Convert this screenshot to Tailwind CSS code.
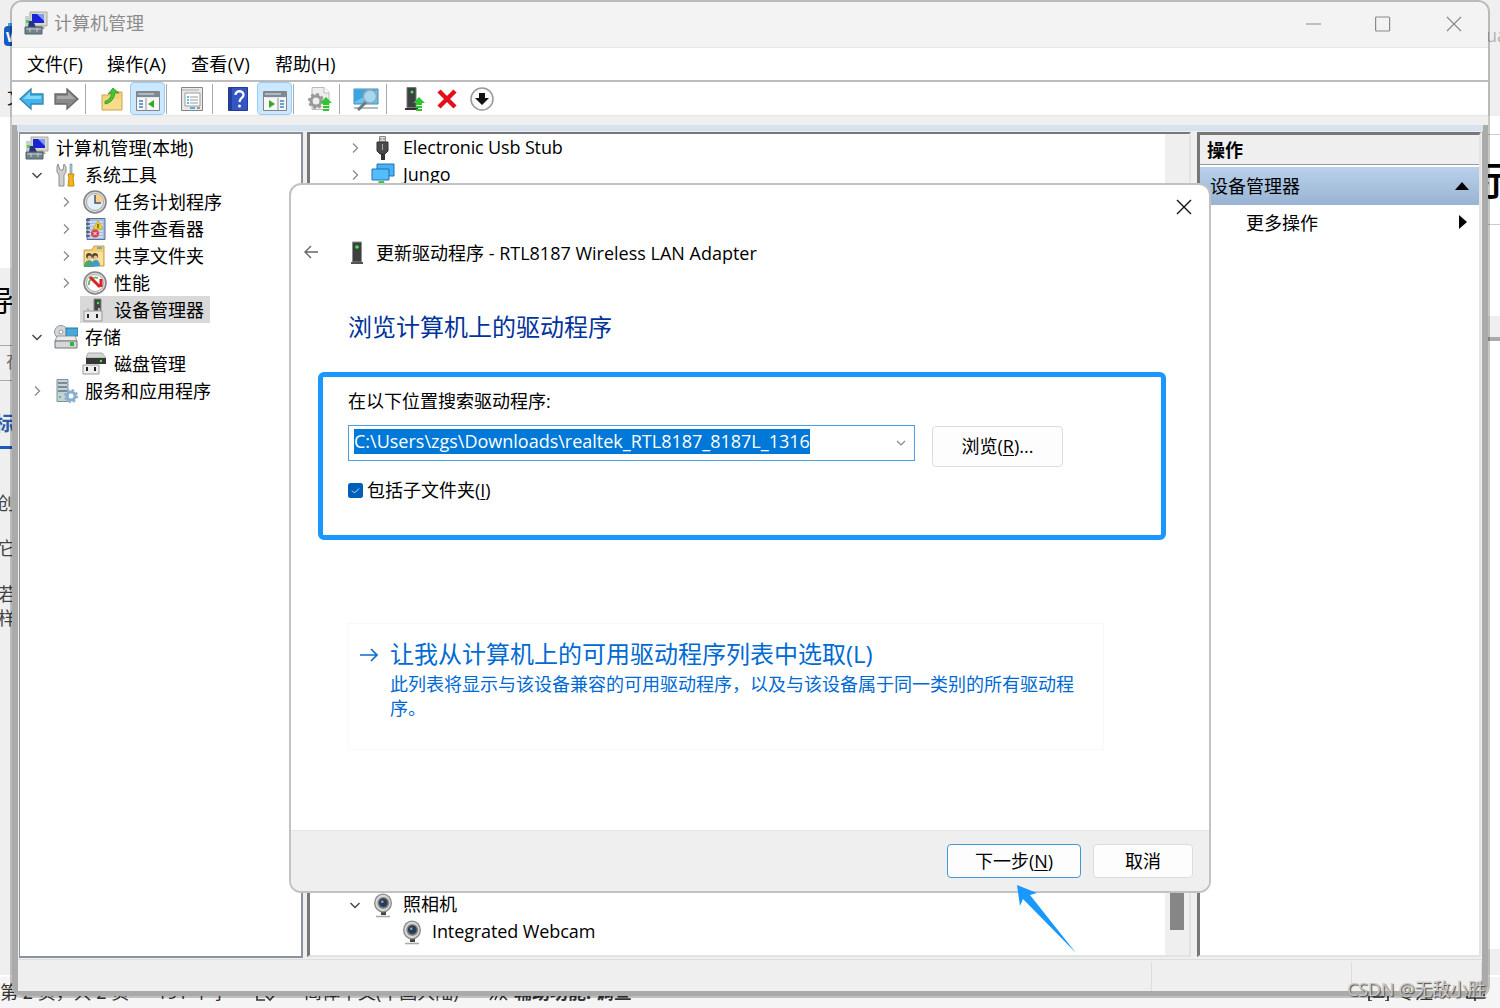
<!DOCTYPE html>
<html lang="zh-CN">
  <head>
    <meta charset="UTF-8" />
    <meta name="viewport" content="width=device-width, initial-scale=1.0" />
    <title>计算机管理</title>
    <script src="https://cdn.jsdelivr.net/npm/@tailwindcss/browser@4"></script>
  </head>
  <body class="relative w-[1500px] h-[1008px] overflow-hidden bg-[#efefef] font-['Open_Sans','Noto_Sans_CJK_SC',sans-serif] text-[18px] leading-[27px] text-black whitespace-nowrap">
    <!-- shared icons -->
    <svg class="hidden">
      <symbol id="chev-r" viewBox="0 0 12 12"><path d="M4 1.500 8.500 6 4 10.500" fill="none" stroke="#8a8a8a" stroke-width="1.300" /></symbol>
      <symbol id="chev-d" viewBox="0 0 12 12"><path d="M1.500 4 6 8.500 10.500 4" fill="none" stroke="#444" stroke-width="1.400" /></symbol>
      <symbol id="computer" viewBox="0 0 24 24">
        <path d="M6 1h17v14H9L6 13z" fill="#d8d8cc" stroke="#aaa99c" />
        <path d="M8 3h12v9H8z" fill="#1c22d8" />
        <path d="M13 3h7v7z" fill="#7d9cf5" />
        <path d="M11 15h8l2 3h-9z" fill="#a8a898" />
        <path d="M1 5h5v12H1z" fill="#c9d0d4" />
        <path d="M2 9h3v3H2z" fill="#53cf44" />
        <path d="M5 10h4l3 6H4z" fill="#27347d" />
        <path d="M1 16h17v7H1z" fill="#71838a" stroke="#526168" />
        <path d="M2 18h15M6 17v4M13 17v4" stroke="#c4d0d3" />
      </symbol>
      <symbol id="device" viewBox="0 0 14 24">
        <path d="M2.500 1h9v20h-9z" fill="#3d3f40" stroke="#8e8e8e" />
        <path d="M1 22h12" stroke="#4f5355" stroke-width="2" />
        <circle cx="7" cy="6" r="1.800" fill="#3df23d" />
      </symbol>
      <symbol id="webcam" viewBox="0 0 24 26">
        <path d="M10 19h5v4h-5z" fill="#444" />
        <path d="M5 24.500h14" stroke="#aaa" stroke-width="1.600" />
        <ellipse cx="12" cy="11" rx="9" ry="9.600" fill="#8b8b8b" />
        <ellipse cx="12" cy="11" rx="7.600" ry="8.200" fill="#d9d9d9" />
        <circle cx="12.300" cy="11" r="6" fill="#85888a" />
        <circle cx="12.300" cy="10.700" r="4.500" fill="#3c4044" />
        <circle cx="12.300" cy="10.700" r="2.800" fill="#1d3b66" />
        <circle cx="11.300" cy="9.700" r="1.200" fill="#86b3df" />
      </symbol>
    </svg>

    <!-- document window in the background -->
    <div class="absolute left-0 top-[117px] w-3 h-[151px] bg-white"></div>
    <div class="absolute left-0 top-[345px] w-3 h-9 border-y border-[#aaa]"></div>
    <div class="absolute left-2 top-[23px] w-4 h-5 bg-[#41a5ee]"></div>
    <div class="absolute left-1 top-[26px] w-4 h-[20px] rounded-sm bg-[#185abd] text-white text-[15px] leading-[20px] font-bold pl-0.5">W</div>
    <div class="absolute left-[7px] top-[84px] text-[#222]">文</div>
    <div class="absolute -left-[15px] top-[283px] text-[29px] leading-[36px]">导</div>
    <div class="absolute left-[6px] top-[348px] text-[#777]">在</div>
    <div class="absolute -left-[6px] top-[410px] text-[20px] font-bold text-[#2b5da8]">标</div>
    <div class="absolute left-0 top-[446px] w-3 h-[3px] bg-[#185abd]"></div>
    <div class="absolute -left-[3px] top-[490px] text-[#444]">创</div>
    <div class="absolute -left-[2px] top-[535px] text-[#444]">它</div>
    <div class="absolute -left-[2px] top-[581px] text-[#444]">若</div>
    <div class="absolute -left-[2px] top-[605px] text-[#444]">样</div>
    <div class="absolute left-[1486px] top-[22px] text-[#b5b5b5]">ua</div>
    <div class="absolute left-[1485px] top-[116px] w-4 h-[200px] bg-white"></div>
    <div class="absolute left-[1485px] top-[134px] w-4 h-[91px] border-y border-[#ccc]"></div>
    <div class="absolute left-[1476px] top-[158px] text-[40px] leading-[44px] font-medium">示</div>
    <div class="absolute left-[1485px] top-[337px] w-4 h-1 bg-[#aaa]"></div>
    <div class="absolute left-[1485px] top-[341px] w-4 h-[608px] bg-white"></div>
    <div class="absolute left-0 top-[975px] w-[1500px] h-[33px] border-t-2 border-white bg-[#f5f5f5] text-[#333]">
      <span class="absolute left-0 top-[2px]">第 2 页，共 2 页</span>
      <span class="absolute left-[157px] top-[2px]">191 个字</span>
      <svg class="absolute left-[255px] top-[5px] w-6 h-5" viewBox="0 0 24 20" fill="none" stroke="#333" stroke-width="1.600"><path d="M2 2v16h8M11 14l4 4 8-9" /></svg>
      <span class="absolute left-[304px] top-[2px]">简体中文(中国大陆)</span>
      <svg class="absolute left-[488px] top-[5px] w-6 h-5" viewBox="0 0 24 20" fill="none" stroke="#333" stroke-width="1.500"><path d="M2 18l5-7v-6M7 18l3-7M12 18l7-11M12 11l7 7" /></svg>
      <span class="absolute left-[514px] top-[2px] font-bold">辅助功能: 调查</span>
      <svg class="absolute left-[1368px] top-[4px] w-6 h-5" viewBox="0 0 24 20" fill="none" stroke="#333" stroke-width="1.700"><path d="M4 20H1v-6M17 20h3v-6M6 5v11h9V5" /></svg>
      <span class="absolute left-[1397px] top-[2px]">专注</span>
      <svg class="absolute left-[1466px] top-[4px] w-5 h-5" viewBox="0 0 20 20" fill="none" stroke="#333" stroke-width="1.700"><path d="M1 3v14h17V3M9 16v4" /></svg>
    </div>

    <!-- computer management window -->
    <div class="absolute left-[10px] top-0 w-[1480px] h-[998px] border-2 border-black/22 rounded-xl overflow-hidden bg-[#efefef] bg-clip-padding flex flex-col">
      <header class="h-[46px] shrink-0 bg-[#f3f3f3] border-b border-[#e6e6e6] flex items-center pl-3 text-[#8c8c8c]">
        <svg class="w-6 h-6 mr-1.5 -mt-1"><use href="#computer" /></svg>
        <span class="-mt-0.5">计算机管理</span>
        <svg class="ml-auto mr-[26px] w-[156px] h-4 -mt-0.5" viewBox="0 0 156 16" fill="none" stroke="#8a8a8a" stroke-width="1.200">
          <path d="M0 8h15M141 1l14 14M155 1 141 15" />
          <rect x="69.600" y="1" width="14" height="14" rx="1" />
        </svg>
      </header>

      <nav class="h-[34px] shrink-0 bg-white border-b-2 border-[#bcbcbc] flex items-center gap-6 pl-[15px]">
        <span>文件(F)</span>
        <span class="w-[60px] tracking-[0.3px]">操作(A)</span>
        <span class="w-[60px] tracking-[0.4px]">查看(V)</span>
        <span class="tracking-[0.2px]">帮助(H)</span>
      </nav>

      <!-- toolbar -->
      <div class="h-[34px] shrink-0 bg-white border-b border-[#e6e6e6] flex items-center pl-[7px] [&>svg]:mt-px">
        <svg class="w-[26px] h-6" viewBox="0 0 26 24"><path d="M1 12 12 2v5h12v10H12v5z" fill="#3db5ef" stroke="#3784ac" stroke-width="1.300" /><path d="M4 12l7-7v4h11v3z" fill="#85d5f8" /></svg>
        <svg class="w-[26px] h-6 ml-2" viewBox="0 0 26 24"><path d="M25 12 14 2v5H2v10h12v5z" fill="#898989" stroke="#676767" stroke-width="1.300" /><path d="M22 12l-7-7v4H4v3z" fill="#a9a9a9" /></svg>
        <div class="w-px h-[30px] bg-[#aaa] ml-[6px]"></div>
        <svg class="w-6 h-6 ml-[14px]" viewBox="0 0 24 24"><path d="M2 8h8l2-3h10v18H2z" fill="#f4d278" stroke="#caa653" /><path d="M3 12h18v10H3z" fill="#f8dc8e" /><path d="M5 14c5-1 6-5 7-8l-4 1 5-6 6 5-4 0c-1 6-4 10-10 11z" fill="#45c531" stroke="#298d1c" stroke-width=".7" /></svg>
        <div class="w-[35px] h-[33px] ml-[6px] rounded-sm border border-[#99ccf5] bg-[#cce8ff] flex items-center justify-center">
          <svg class="w-6 h-6 mt-1" viewBox="0 0 24 24"><path d="M.5 2.500h23v19H.5z" fill="#f7f7f7" stroke="#7d858d" /><path d="M1 3h22v5H1z" fill="#7f8993" /><path d="M2 5h16M2 8.500h20" stroke="#e3e9ed" /><path d="M10 9v12" stroke="#8b9299" /><path d="M3 12h4M3 15h4M3 18h4" stroke="#4680bb" stroke-width="1.600" /><path d="M18 11v8l-6-4z" fill="#35a72d" /></svg>
        </div>
        <div class="w-px h-[30px] bg-[#aaa] ml-px"></div>
        <svg class="w-6 h-6 ml-[13px]" viewBox="0 0 24 24"><path d="M1.500.5h21v23h-21z" fill="#e9e9e9" stroke="#858585" /><path d="M2 3h17" stroke="#aaa" /><path d="M5 6h15v13H5z" fill="#fff" stroke="#9b9b9b" /><path d="M7 10h2M7 13h2M7 16h2" stroke="#37a5e2" stroke-width="1.500" /><path d="M10 10h8M10 13h8M10 16h8" stroke="#999" /><path d="M10 20h5v2h-5z" fill="#4bb6de" /><path d="M17 20h3v2h-3z" fill="#999" /></svg>
        <div class="w-px h-[30px] bg-[#aaa] ml-[8px]"></div>
        <svg class="w-5 h-6 ml-[15px]" viewBox="0 0 20 24"><path d="M.5.5h19v23H.5z" fill="#3456c5" stroke="#263b94" /><path d="M1 1h3v22H1z" fill="#253f99" /><path d="M7.500 8c0-5 8-5 8 0 0 3-4 3-4 7" fill="none" stroke="#fff" stroke-width="2.300" /><circle cx="11.500" cy="19" r="1.500" fill="#fff" /></svg>
        <div class="w-[35px] h-[33px] ml-[9px] rounded-sm border border-[#99ccf5] bg-[#cce8ff] flex items-center justify-center">
          <svg class="w-6 h-6 mt-1" viewBox="0 0 24 24"><path d="M.5 2.500h23v19H.5z" fill="#f7f7f7" stroke="#7d858d" /><path d="M1 3h22v5H1z" fill="#7f8993" /><path d="M2 5h16M2 8.500h20" stroke="#e3e9ed" /><path d="M15 9v12" stroke="#8b9299" /><path d="M17 12h4M17 15h4M17 18h4" stroke="#4680bb" stroke-width="1.600" /><path d="M6 11v8l6-4z" fill="#35a72d" /></svg>
        </div>
        <div class="w-px h-[30px] bg-[#aaa] ml-px"></div>
        <svg class="w-6 h-6 ml-[14px]" viewBox="0 0 24 24"><path d="M4 .5h12l5 5v17H4z" fill="#eee" stroke="#bbb" /><path d="M16 0v6h5" fill="#fff" stroke="#bbb" /><circle cx="8" cy="14" r="5" fill="none" stroke="#999" stroke-width="3" /><circle cx="8" cy="14" r="7" fill="none" stroke="#999" stroke-width="2" stroke-dasharray="3 2.500" /><path d="M18 10l6 6h-3v2h-6v-2h-3zM15 19h6v2h-6zM15 22h6v2h-6z" fill="#2ec52e" /></svg>
        <div class="w-px h-[30px] bg-[#aaa] ml-[7px]"></div>
        <svg class="w-[26px] h-6 ml-[13px]" viewBox="0 0 26 24"><path d="M1 2h24v15H1z" fill="#69c3f2" stroke="#448bb6" /><path d="M1 3h23L1 15z" fill="#3ba4dc" /><path d="M1 21h24" stroke="#96a5af" stroke-width="1.500" /><path d="M5 23l8-8" stroke="#6d7880" stroke-width="3" /><circle cx="17" cy="9.500" r="6.500" fill="#a3d9f5" stroke="#9aa7ae" stroke-width="1.500" /></svg>
        <div class="w-px h-[30px] bg-[#aaa] ml-[7px]"></div>
        <svg class="w-[22px] h-6 ml-[17px]" viewBox="0 0 22 24"><path d="M3 .5h9v20H3z" fill="#3e4143" stroke="#777" /><path d="M1 22h13" stroke="#333" stroke-width="2" /><circle cx="8" cy="5" r="1.500" fill="#3f3" /><path d="M15 10l6 6h-3v2h-6v-2H9zM12 19h6v2h-6zM12 22h6v2h-6z" fill="#2ec52e" /></svg>
        <svg class="w-[22px] h-[22px] ml-[10px]" viewBox="0 0 22 22"><path d="M3 3l16 16M19 3 3 19" stroke="#e3101b" stroke-width="4.500" /></svg>
        <svg class="w-6 h-6 ml-3" viewBox="0 0 24 24"><circle cx="12" cy="12" r="11" fill="#fafafa" stroke="#999" stroke-width="1.500" /><path d="M9 6h6v5h4l-7 7-7-7h4z" fill="#111" /></svg>
      </div>

      <div class="h-[9px] shrink-0"></div>

      <div class="grow border-x-[6px] border-b-[5px] border-[#aaa] bg-[#efefef] flex flex-col">
        <div class="h-[6px] -mx-px bg-[#d6e3ef]"></div>
        <div class="h-[828px] flex pt-px pl-px">
          <!-- console tree -->
          <aside class="w-[284px] h-[826px] bg-white border-2 border-[#8b929b] border-l-[1px] pl-[5px] [&>div]:flex [&>div]:h-[27px] [&>div]:items-center">
            <div><svg class="w-6 h-6 mr-[7px]"><use href="#computer" /></svg><span class="pt-px tracking-[0.1px]">计算机管理(本地)</span></div>
            <div class="pl-[6px]">
              <svg class="w-3 h-3 mr-[11px]"><use href="#chev-d" /></svg>
              <svg class="w-6 h-6 mr-[7px]" viewBox="0 0 24 24"><path d="M4 1l2 6h3l1-6 2 3v5l-2 3v11H5V12L3 9V4z" fill="#d0d0d0" stroke="#8d8d8d" /><path d="M16 1h2v11h-2z" fill="#aac6d8" stroke="#6f8795" stroke-width=".6" /><path d="M14 11h6l-1 4 1 8h-6l1-8z" fill="#f5b51a" stroke="#c18a0b" /></svg>
              <span class="pt-px">系统工具</span>
            </div>
            <div class="pl-[35px]">
              <svg class="w-3 h-3 mr-[11px]"><use href="#chev-r" /></svg>
              <svg class="w-6 h-6 mr-[7px]" viewBox="0 0 24 24"><circle cx="12" cy="12" r="11" fill="#ddd" stroke="#858585" stroke-width="1.600" /><circle cx="12" cy="12" r="8.500" fill="#e5eff8" stroke="#a9a9a9" /><path d="M12 12V4a8 8 0 0 1 8 8z" fill="#f5d08b" /><path d="M12 5v8h6" fill="none" stroke="#456" stroke-width="1.500" /></svg>
              <span class="pt-px">任务计划程序</span>
            </div>
            <div class="pl-[35px]">
              <svg class="w-3 h-3 mr-[11px]"><use href="#chev-r" /></svg>
              <svg class="w-6 h-6 mr-[7px]" viewBox="0 0 24 24"><path d="M4 1.500h18v21H4z" fill="#a5bddd" stroke="#587099" /><path d="M6 5h14M6 8h14M6 11h14M6 14h14M6 17h14M6 20h14" stroke="#eef4fb" /><path d="M3 3h4M3 7h4M3 11h4M3 15h4M3 19h4" stroke="#4a556b" stroke-width="1.500" /><path d="M15 4l5 8H10z" fill="#f9d41c" stroke="#c19900" stroke-width=".6" /><path d="M15 7v4" stroke="#222" /><circle cx="12" cy="16.500" r="4" fill="#dc4450" /><path d="M10.500 15l3 3M13.500 15l-3 3" stroke="#fff" /></svg>
              <span class="pt-px">事件查看器</span>
            </div>
            <div class="pl-[35px]">
              <svg class="w-3 h-3 mr-[11px]"><use href="#chev-r" /></svg>
              <svg class="w-6 h-6 mr-[7px]" viewBox="0 0 24 24"><path d="M1 6h8l2-4h10v20H1z" fill="#f4cf70" stroke="#c79f42" /><path d="M14 4h5" stroke="#4b9be0" stroke-width="1.500" /><path d="M2 8h18v13H2z" fill="#fae19b" /><circle cx="6" cy="12" r="3" fill="#56442f" /><circle cx="12" cy="12" r="3" fill="#56442f" /><path d="M1 23c0-9 10-9 10 0z" fill="#48a779" /><path d="M8 23c0-9 9-9 9-1z" fill="#429cc3" /><circle cx="6.500" cy="13.500" r="2" fill="#e9c09c" /><circle cx="12.500" cy="13.500" r="2" fill="#e9c09c" /></svg>
              <span class="pt-px">共享文件夹</span>
            </div>
            <div class="pl-[35px]">
              <svg class="w-3 h-3 mr-[11px]"><use href="#chev-r" /></svg>
              <svg class="w-6 h-6 mr-[7px]" viewBox="0 0 24 24"><circle cx="12" cy="12" r="11" fill="#ddd" stroke="#858585" stroke-width="1.600" /><circle cx="12" cy="12" r="8.500" fill="#fff" stroke="#aaa" /><path d="M6 14a6.500 6.500 0 0 1 9-7" fill="none" stroke="#6dbb68" stroke-width="2" /><path d="M7 6l10 10M18 8v8" stroke="#dc2225" stroke-width="3" /></svg>
              <span class="pt-px">性能</span>
            </div>
            <div class="ml-[55px] w-[130px] bg-[#d9d9d9] pl-[2px]">
              <svg class="w-6 h-6 mr-[8px]" viewBox="0 0 24 24"><path d="M12 1h7v12h-7z" fill="#414446" stroke="#888" /><circle cx="16" cy="5" r="1.200" fill="#3f3" /><path d="M6 10v3M17 10v3" stroke="#bbb" stroke-width="2" /><path d="M2 13h18v10H2z" fill="#eaeaea" stroke="#999" /><path d="M6 16v4M15 16v4" stroke="#222" stroke-width="2" /></svg>
              <span class="pt-px">设备管理器</span>
            </div>
            <div class="pl-[6px]">
              <svg class="w-3 h-3 mr-[11px]"><use href="#chev-d" /></svg>
              <svg class="w-6 h-6 mr-[7px]" viewBox="0 0 24 24"><circle cx="7" cy="7" r="6.500" fill="#d3d7d9" stroke="#8d989e" /><circle cx="7" cy="7" r="2" fill="#fff" stroke="#999" /><path d="M12 3h12v8H12z" fill="#45a9dc" stroke="#28749e" /><path d="M3 11h18l2 5H1z" fill="#ebebeb" stroke="#999" /><path d="M1 16h22v7H1z" fill="#d4d7d8" stroke="#70777b" /><path d="M18 17v4" stroke="#33b634" stroke-width="4" /></svg>
              <span class="pt-px">存储</span>
            </div>
            <div class="pl-[57px]">
              <svg class="w-6 h-6 mr-[8px]" viewBox="0 0 24 24"><path d="M6 1h14l4 5H4z" fill="#d5d5d5" stroke="#aaa" /><path d="M4 6h20v6H4z" fill="#343637" /><circle cx="19" cy="9" r="1.200" fill="#3f3" /><path d="M1 13h16v9H1z" fill="#eee" stroke="#999" /><path d="M5 15v4M13 15v4" stroke="#222" stroke-width="2" /></svg>
              <span class="pt-px">磁盘管理</span>
            </div>
            <div class="pl-[6px]">
              <svg class="w-3 h-3 mr-[11px]"><use href="#chev-r" /></svg>
              <svg class="w-6 h-6 mr-[7px]" viewBox="0 0 24 24"><path d="M3 .5h11v22H3z" fill="#c4d2d8" stroke="#7d939e" /><path d="M4 4h9M4 8h9M4 12h9" stroke="#61747e" stroke-width="1.500" /><circle cx="6" cy="18" r="1" fill="#3b4" /><circle cx="17" cy="17" r="4" fill="none" stroke="#87aecf" stroke-width="3" /><circle cx="17" cy="17" r="6" fill="none" stroke="#87aecf" stroke-width="2" stroke-dasharray="2.500 2.200" /></svg>
              <span class="pt-px">服务和应用程序</span>
            </div>
          </aside>

          <!-- device list -->
          <main class="w-[884px] h-[825px] ml-1 bg-white border-l-[3px] border-t-2 border-r-2 border-b-2 border-l-[#777] border-t-[#777] border-r-[#e3e3e3] border-b-[#e3e3e3] flex justify-between">
            <div class="pl-[39px] [&>div]:flex [&>div]:h-[27px] [&>div]:items-center">
              <div>
                <svg class="w-3 h-3 mr-[10px]"><use href="#chev-r" /></svg>
                <svg class="w-6 h-6 mr-[8px]" viewBox="0 0 24 24"><path d="M8.500.5h6V6h-6z" fill="#ddd" stroke="#888" /><path d="M10 2v2M13 2v2" stroke="#777" /><path d="M6 6h11v9l-3 3H9l-3-3z" fill="#4a4a4a" stroke="#333" /><path d="M10 18h4v6h-4z" fill="#333" /><path d="M11.500 8v6" stroke="#aaa" /></svg>
                <span class="tracking-[-0.15px]">Electronic Usb Stub</span>
              </div>
              <div>
                <svg class="w-3 h-3 mr-[10px]"><use href="#chev-r" /></svg>
                <svg class="w-6 h-6 mr-[8px]" viewBox="0 0 24 24"><path d="M6 1h17v12H6z" fill="#45b2fa" stroke="#2270a8" /><path d="M1 6h17v11H1z" fill="#54bcff" stroke="#2270a8" /><path d="M8 18h5l1 4H6z" fill="#37ca46" /><path d="M0 21h22" stroke="#aaa" stroke-width="2" /></svg>
                Jungo
              </div>
              <div class="mt-[703px]">
                <svg class="w-3 h-3 mr-[10px]"><use href="#chev-d" /></svg>
                <svg class="w-6 h-[26px] mr-[8px]"><use href="#webcam" /></svg>
                照相机
              </div>
              <div class="pl-[51px]">
                <svg class="w-6 h-[26px] mr-[8px]"><use href="#webcam" /></svg>
                <span class="tracking-[-0.1px]">Integrated Webcam</span>
              </div>
            </div>
            <div class="w-[24px] bg-[#efefef] flex flex-col justify-end pb-[25px] pl-[5px]">
              <div class="w-[14px] h-[90px] bg-[#868686]"></div>
            </div>
          </main>

          <!-- actions -->
          <section class="w-[284px] h-[825px] ml-[6px] bg-white border-l-[3px] border-t-[3px] border-r-2 border-b-2 border-l-[#777] border-t-[#777] border-r-[#e3e3e3] border-b-[#e3e3e3]">
            <div class="h-[30px] bg-[#efefef] border-b border-[#999] pl-[7px] pt-[2px] font-bold">操作</div>
            <div class="h-[38px] mt-[2px] bg-linear-to-b from-[#b9d1ea] to-[#98b3d3] flex items-center justify-between pl-[10px] pr-[10px]">
              <span class="pt-px">设备管理器</span>
              <svg class="w-[14px] h-2" viewBox="0 0 14 8"><path d="M7 0l7 8H0z" /></svg>
            </div>
            <div class="h-9 flex items-center justify-between pl-[46px] pr-3">
              更多操作
              <svg class="w-2 h-[14px] -mt-0.5" viewBox="0 0 8 14"><path d="M0 0l8 7-8 7z" /></svg>
            </div>
          </section>
        </div>

        <!-- status bar -->
        <footer class="grow border-t border-[#ddd] flex justify-end pt-[2px]">
          <div class="w-[200px] border-l border-[#ddd]"></div>
          <div class="w-[131px] border-x border-[#ddd]"></div>
        </footer>
      </div>
    </div>

    <!-- update driver dialog -->
    <div class="absolute left-[289px] top-[183px] w-[922px] h-[710px] border-2 border-[#c2c2c2] rounded-xl overflow-hidden bg-white flex flex-col">
      <div class="h-[42px] shrink-0 flex justify-end pt-[14px] pr-[17px]">
        <svg class="w-4 h-4" viewBox="0 0 16 16"><path d="M1 1l14 14M15 1 1 15" stroke="#111" stroke-width="1.400" /></svg>
      </div>
      <div class="h-[52px] shrink-0 flex items-center pl-[13px]">
        <svg class="w-[14px] h-[14px] -mt-[3px]" viewBox="0 0 14 14" fill="none" stroke="#666" stroke-width="1.400"><path d="M14 7H1M7 1 1 7l6 6" /></svg>
        <svg class="w-[14px] h-6 ml-[32px] mr-3"><use href="#device" /></svg>
        <span>更新驱动程序 - RTL8187 Wireless LAN Adapter</span>
      </div>
      <h1 class="mt-[28px] ml-[57px] text-[24px] leading-[40px] text-[#003399]">浏览计算机上的驱动程序</h1>

      <div class="ml-[27px] mt-[25px] w-[848px] h-[168px] shrink-0 border-[5px] border-[#1a98ff] rounded-md pl-[25px] pt-[11px]">
        <div>在以下位置搜索驱动程序:</div>
        <div class="flex mt-[10px]">
          <div class="w-[567px] h-[36px] border border-[#4ba0e1] flex items-start justify-between pl-[5px] pt-[3px] pr-[7px]">
            <span class="h-[25px] leading-[24px] bg-[#0078d7] text-white">C:\Users\zgs\Downloads\realtek_RTL8187_8187L_1316</span>
            <svg class="w-3 h-3 mt-2" viewBox="0 0 12 12"><path d="M2 4l4 4 4-4" fill="none" stroke="#888" stroke-width="1.200" /></svg>
          </div>
          <button class="w-[131px] h-[41px] ml-[17px] border border-[#ddd] rounded bg-[#fdfdfd] mt-px">浏览(<u class="underline-offset-2">R</u>)...</button>
        </div>
        <div class="flex items-center mt-[10px]">
          <svg class="w-[15px] h-[15px] mr-1" viewBox="0 0 15 15"><rect width="15" height="15" rx="2.500" fill="#005fb8" /><path d="M4 7.500l2.500 2.500L11 5.500" fill="none" stroke="#cfe3f5" /></svg>
          包括子文件夹(<u class="underline-offset-2">I</u>)
        </div>
      </div>

      <div class="ml-[57px] mt-[83px] w-[756px] h-[127px] shrink-0 border border-[#f8f8f8] text-[#006ad4] flex pl-[11px] pt-3">
        <svg class="w-[18px] h-[14px] mt-3 mr-3" viewBox="0 0 18 14" fill="none" stroke="#0a6ed1" stroke-width="1.600"><path d="M0 7h17M11 1l6 6-6 6" /></svg>
        <div>
          <div class="text-[24px] leading-[36px]">让我从计算机上的可用驱动程序列表中选取(L)</div>
          <div class="leading-[24px]">此列表将显示与该设备兼容的可用驱动程序，以及与该设备属于同一类别的所有驱动程<br />序。</div>
        </div>
      </div>

      <div class="mt-auto h-[61px] shrink-0 bg-[#efefef] border-t border-[#e5e5e5] flex justify-end items-center gap-3 pr-4">
        <button class="w-[134px] h-[34px] border border-[#4098d7] rounded-sm bg-[#fdfdfd]">下一步(<u class="underline-offset-2">N</u>)</button>
        <button class="w-[100px] h-[34px] border border-[#ddd] rounded-sm bg-[#fdfdfd]">取消</button>
      </div>
    </div>

    <!-- arrow pointing at the next button -->
    <svg class="absolute left-[1016px] top-[884px] w-[60px] h-[70px]" viewBox="0 0 60 70"><path d="M1 1l20 8-7 2 46 58L7 15l-3 7z" fill="#1a98ff" /></svg>
    <div class="absolute left-[1347px] top-[976px] tracking-[-0.2px] text-[#c8c8c8] [text-shadow:1px_1px_1px_#444]">CSDN @无敌小胜</div>
  </body>
</html>
